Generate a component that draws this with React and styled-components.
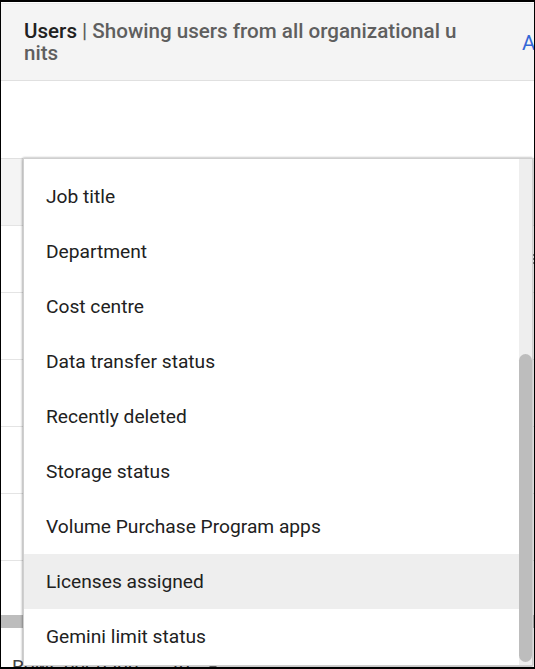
import React from "react";
import styled, { createGlobalStyle } from "styled-components";

const Global = createGlobalStyle`
  html, body { margin: 0; padding: 0; background: #fff; }
  body { font-family: Roboto, "Liberation Sans", sans-serif; overflow: hidden; }
  * { box-sizing: border-box; }
`;

const Frame = styled.div`
  position: relative;
  width: 535px;
  height: 669px;
  overflow: hidden;
  background: #fff;
  border-style: solid;
  border-color: #000;
  border-width: 2px 1px 2px 1px;
  display: flex;
  flex-direction: column;
`;

const Header = styled.header`
  flex: none;
  height: 78px;
  margin-top: 1px;
  padding: 16px 0 0 23px;
  background: #f4f4f4;
  border-top: 1px solid #ececec;
  border-bottom: 1px solid #e0e0e0;
  display: flex;
  justify-content: space-between;
`;

const Title = styled.h1`
  margin: 0;
  width: 436px;
  font-size: 20.6px;
  line-height: 22px;
  font-weight: 500;
  color: #5f5f5f;
  word-break: break-all;
`;

const Strong = styled.span`
  color: #212121;
`;

const Action = styled.span`
  font-size: 20.6px;
  line-height: 22px;
  margin-top: 12px;
  width: 12px;
  overflow: hidden;
  color: #3367d6;
`;

const Spacer = styled.div`
  flex: none;
  height: 77px;
`;

const TableHead = styled.div`
  flex: none;
  height: 68px;
  background: #f4f4f4;
  border-top: 1px solid #e0e0e0;
  border-bottom: 1px solid #e4e4e4;
`;

const Row = styled.div`
  flex: none;
  height: 67px;
  display: flex;
  justify-content: flex-end;
  align-items: center;
  border-bottom: 1px solid #e4e4e4;
`;

const RowDots = styled.span`
  width: 1px;
  height: 11px;
  background: repeating-linear-gradient(to bottom, #8a8a8a 0 2px, transparent 2px 4px);
`;

const RowEnd = styled.div`
  flex: none;
  height: 54px;
`;

const HScroll = styled.div`
  flex: none;
  height: 13px;
  background: #bdbdbd;
`;

const Pager = styled.div`
  flex: none;
  padding: 28px 0 0 11px;
  display: flex;
  align-items: center;
  gap: 30px;
  font-size: 19.2px;
  line-height: 22px;
  color: #444;
`;

const Caret = styled.span`
  width: 0;
  height: 0;
  margin-left: -12px;
  border-left: 5px solid transparent;
  border-right: 5px solid transparent;
  border-top: 5px solid #757575;
`;

const Menu = styled.div`
  position: absolute;
  left: 22px;
  top: 156px;
  width: 510px;
  height: 508px;
  background: #fff;
  border: 1px solid #cfcfcf;
  box-shadow: -1px 0 2px rgba(0, 0, 0, 0.12), 0 1px 3px rgba(0, 0, 0, 0.28), 0 -1px 2px rgba(0, 0, 0, 0.1);
  display: flex;
`;

const List = styled.ul`
  flex: 1;
  margin: 0;
  padding: 10px 0 0;
  list-style: none;
`;

const Item = styled.li`
  height: 55px;
  padding-left: 22px;
  display: flex;
  align-items: center;
  font-size: 19.2px;
  color: #212121;
  background: ${(p) => (p.$active ? "#eeeeee" : "transparent")};
`;

const Track = styled.div`
  flex: none;
  width: 13px;
  padding-top: 195px;
  padding-bottom: 3px;
  background: #eeeeee;
  display: flex;
`;

const Thumb = styled.div`
  flex: 1;
  background: #bdbdbd;
  border-radius: 7px;
`;

const items = [
  "Job title",
  "Department",
  "Cost centre",
  "Data transfer status",
  "Recently deleted",
  "Storage status",
  "Volume Purchase Program apps",
  "Licenses assigned",
  "Gemini limit status",
];

export default function App() {
  return (
    <Frame>
      <Global />
      <Header>
        <Title>
          <Strong>Users</Strong> | Showing users from all organizational units
        </Title>
        <Action>Add</Action>
      </Header>
      <Spacer />
      <TableHead />
      {[0, 1, 2, 3, 4].map((i) => (
        <Row key={i}>{i === 0 && <RowDots />}</Row>
      ))}
      <RowEnd />
      <HScroll />
      <Pager>
        <span>Rows per page</span>
        <span>20</span>
        <Caret />
      </Pager>
      <Menu>
        <List>
          {items.map((t) => (
            <Item key={t} $active={t === "Licenses assigned"}>
              {t}
            </Item>
          ))}
        </List>
        <Track>
          <Thumb />
        </Track>
      </Menu>
    </Frame>
  );
}
